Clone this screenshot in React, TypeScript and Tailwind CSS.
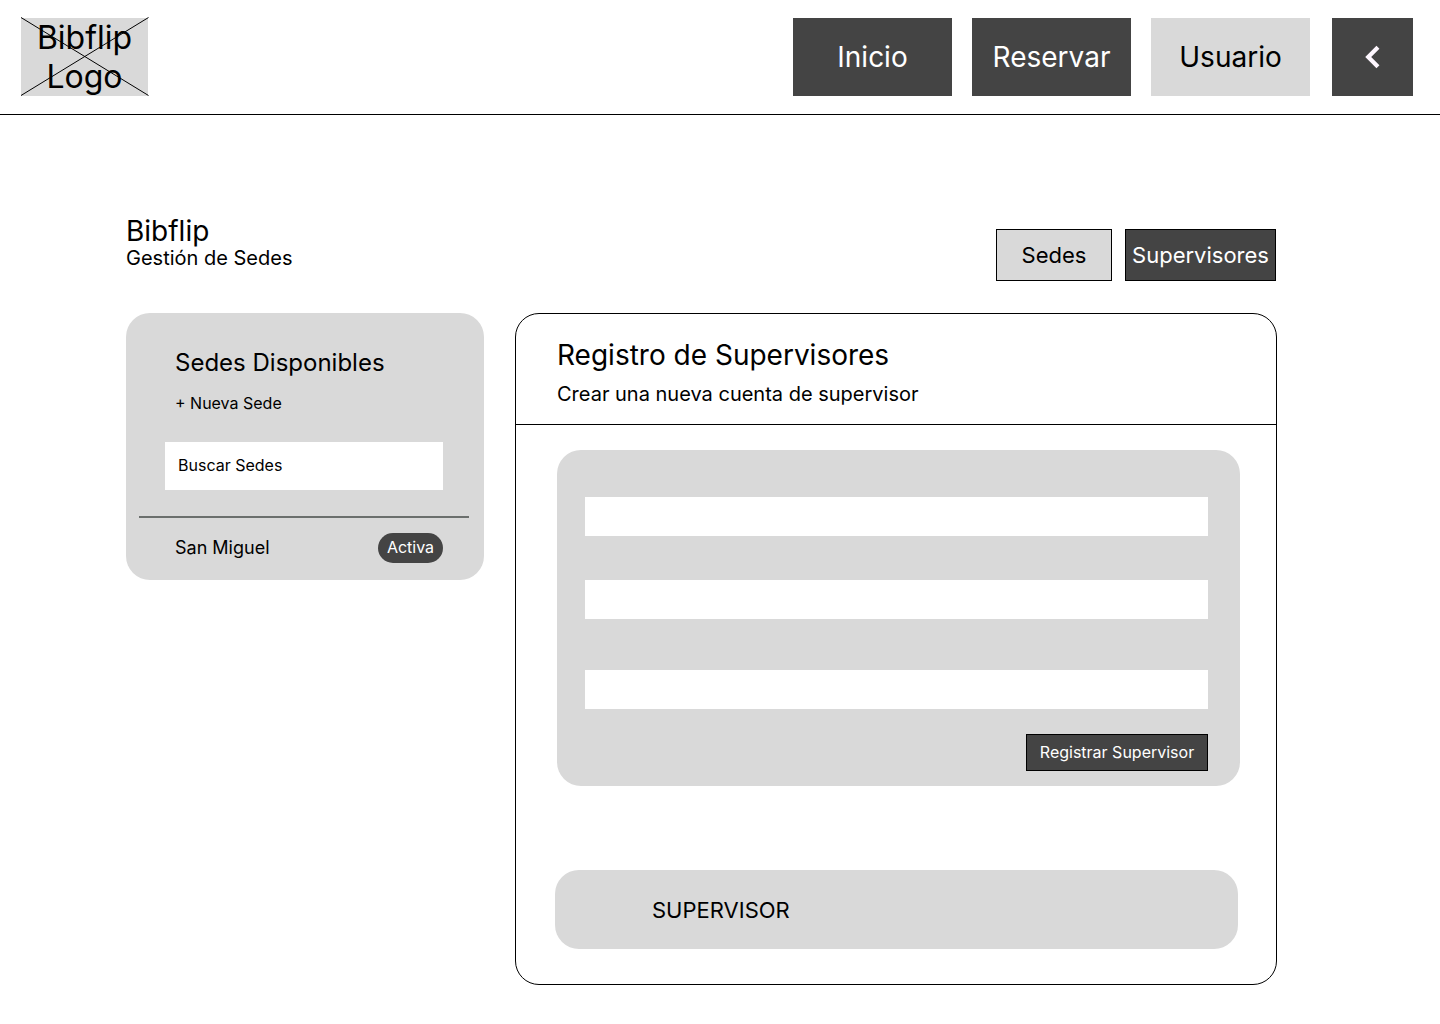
import { useState } from 'react';
import clsx from 'clsx';

const navLinks = [
  { label: 'Inicio', active: false },
  { label: 'Reservar', active: false },
  { label: 'Usuario', active: true },
];

const sedes = [{ name: 'San Miguel', status: 'Activa' }];

const Logo = () => (
  <a href="#" className="relative flex h-[78px] w-[127px] items-center justify-center bg-[#d9d9d9] text-center text-[32px] leading-[39px]">
    <span>
      Bibflip
      <br />
      Logo
    </span>
    <svg className="absolute inset-0 h-full w-full overflow-visible" viewBox="0 0 127 78" aria-hidden="true">
      <path d="M0 -0.5L127.5 77.5M0 77.5L127.5 -0.5" stroke="#000" strokeWidth="1" fill="none" />
    </svg>
  </a>
);

const Header = () => (
  <header className="flex items-center justify-between border-b border-black py-[18px] pr-[27px] pl-[21px]">
    <Logo />
    <div className="flex items-center gap-[22px]">
      <nav className="flex gap-5">
        {navLinks.map((link) => (
          <a
            key={link.label}
            href="#"
            className={clsx(
              'flex h-[78px] w-[159px] items-center justify-center text-[28px]',
              link.active ? 'bg-[#d9d9d9]' : 'bg-[#444444] text-white'
            )}
          >
            {link.label}
          </a>
        ))}
      </nav>
      <button type="button" aria-label="Volver" className="flex h-[78px] w-[81px] items-center justify-center bg-[#444444]">
        <svg className="h-11 w-11" viewBox="0 0 24 24" fill="none" aria-hidden="true">
          <path d="M14.7 6.7L9.4 12L14.7 17.3" stroke="#fef7ff" strokeWidth="2.3" />
        </svg>
      </button>
    </div>
  </header>
);

const SedesCard = () => {
  const [search, setSearch] = useState('');

  return (
    <aside className="w-[358px] shrink-0 rounded-3xl bg-[#d9d9d9] pt-8 pb-[17px]">
      <div className="px-[49px]">
        <h2 className="text-2xl leading-9">Sedes Disponibles</h2>
        <button type="button" className="mt-[10px] block text-base leading-6">
          + Nueva Sede
        </button>
      </div>
      <div className="mt-[27px] pr-[41px] pl-[39px]">
        <input
          type="search"
          aria-label="Buscar Sedes"
          placeholder="Buscar Sedes"
          value={search}
          onChange={(e) => setSearch(e.target.value)}
          className="block h-12 w-full bg-white px-[13px] pb-0.5 text-base placeholder:text-black"
        />
      </div>
      <hr className="mt-[26px] mr-[15px] ml-[13px] border-t-2 border-[#6b6f6d]" />
      <ul className="mt-[15px]">
        {sedes.map((sede) => (
          <li key={sede.name} className="flex items-center justify-between pr-[41px] pl-[49px]">
            <span className="text-lg leading-[30px]">{sede.name}</span>
            <span className="flex h-[30px] w-[65px] items-center justify-center rounded-full bg-[#444444] pb-0.5 text-base text-white">
              {sede.status}
            </span>
          </li>
        ))}
      </ul>
    </aside>
  );
};

const SupervisorForm = () => {
  const fieldClass = 'block h-[39px] w-full bg-white px-3 text-base';

  return (
    <form
      onSubmit={(e) => e.preventDefault()}
      className="flex flex-col rounded-3xl bg-[#d9d9d9] pt-[47px] pr-8 pb-[15px] pl-7"
    >
      <input type="text" aria-label="Nombre" className={fieldClass} />
      <input type="email" aria-label="Correo" className={clsx(fieldClass, 'mt-11')} />
      <input type="password" aria-label="Contraseña" className={clsx(fieldClass, 'mt-[51px]')} />
      <button
        type="submit"
        className="mt-[25px] h-[37px] w-[182px] self-end border border-black bg-[#444444] pb-0.5 text-base text-white"
      >
        Registrar Supervisor
      </button>
    </form>
  );
};

const App = () => {
  return (
    <div className="min-h-screen bg-white font-['Inter',sans-serif] text-black">
      <Header />
      <main className="pt-[99px] pr-[163px] pb-[39px] pl-[126px]">
        <div className="flex items-end justify-between pr-px">
          <div className="self-start">
            <h1 className="text-[28px] leading-[34px]">Bibflip</h1>
            <p className="text-xl leading-5">Gestión de Sedes</p>
          </div>
          <div className="mt-[15px] flex gap-[13px]">
            <button type="button" className="h-[52px] w-[116px] border border-black bg-[#d9d9d9] text-[22px]">
              Sedes
            </button>
            <button type="button" className="h-[52px] w-[151px] border border-black bg-[#444444] text-[22px] text-white">
              Supervisores
            </button>
          </div>
        </div>

        <div className="mt-8 flex items-start gap-[31px]">
          <SedesCard />
          <section className="min-w-0 flex-1 rounded-3xl border border-black pb-[35px]">
            <div className="border-b border-black px-[41px] pt-[23px] pb-[14px]">
              <h2 className="text-[28px] leading-9">Registro de Supervisores</h2>
              <p className="mt-[5px] text-xl leading-8">Crear una nueva cuenta de supervisor</p>
            </div>
            <div className="pt-[25px] pr-9 pl-[41px]">
              <SupervisorForm />
            </div>
            <div className="pt-[84px] pr-[38px] pl-[39px]">
              <div className="flex h-[79px] items-center rounded-3xl bg-[#d9d9d9] px-[97px] pt-0.5 text-[22px]">
                SUPERVISOR
              </div>
            </div>
          </section>
        </div>
      </main>
    </div>
  );
};

export default App;
